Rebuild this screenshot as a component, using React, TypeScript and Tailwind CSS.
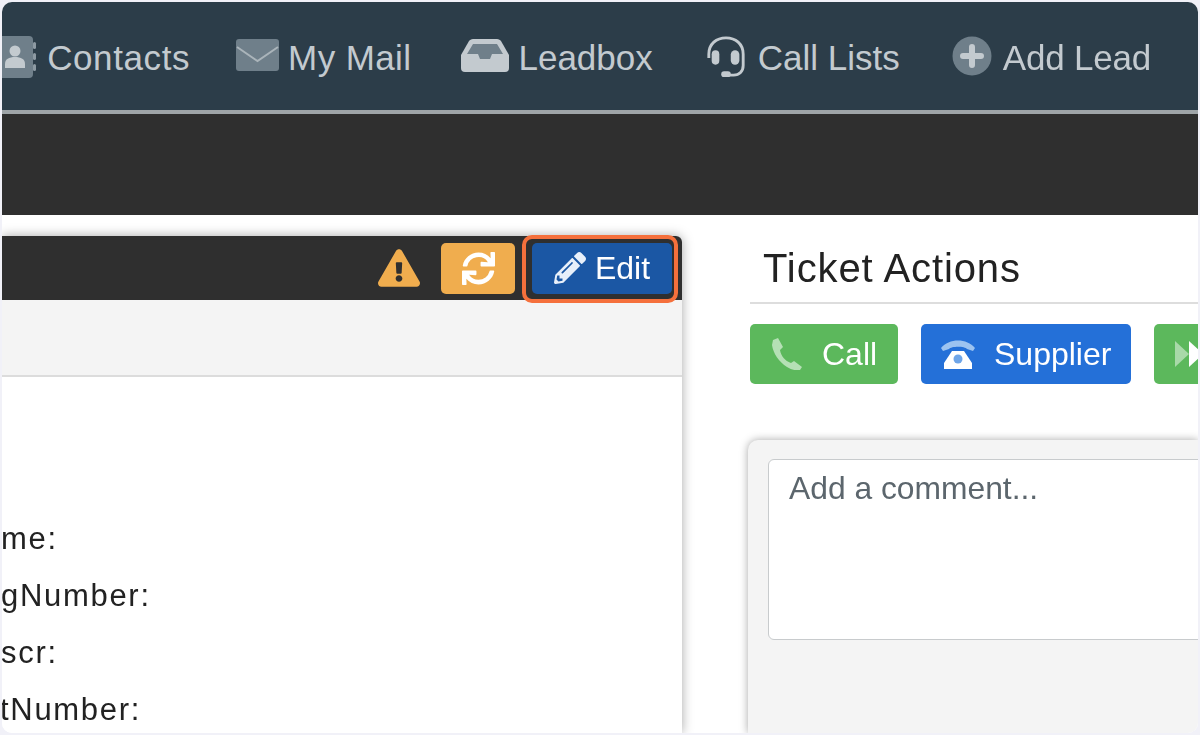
import type { ReactNode } from 'react';
import { FaExclamationTriangle, FaPencilAlt, FaSync } from 'react-icons/fa';

function ContactsIcon() {
  return (
    <svg width="38" height="42" viewBox="0 0 38 42" className="shrink-0 -ml-[4px]">
      <path d="M0 0h29a4 4 0 0 1 4 4v34a4 4 0 0 1-4 4H0z" fill="#6f7f8a" />
      <circle cx="15" cy="15" r="5.5" fill="#c3cacf" />
      <path d="M5 32v-4c0-5 4-7 10-7s10 2 10 7v4z" fill="#c3cacf" />
      <rect x="33" y="6" width="3" height="7" rx="1.5" fill="#8d9aa3" />
      <rect x="33" y="17" width="3" height="7" rx="1.5" fill="#8d9aa3" />
      <rect x="33" y="28" width="3" height="7" rx="1.5" fill="#8d9aa3" />
    </svg>
  );
}

function MailIcon() {
  return (
    <svg width="43" height="32" viewBox="0 0 43 32" className="shrink-0 -mt-[4px]">
      <rect width="43" height="32" rx="3" fill="#6f7f8a" />
      <path d="M1 8l20.5 14L42 8" fill="none" stroke="#aab4ba" strokeWidth="2" />
    </svg>
  );
}

function InboxIcon() {
  return (
    <svg width="48" height="33" viewBox="0 0 48 33" className="shrink-0 -mt-[4px] -ml-[2px]">
      <path d="M12 0h24c2 0 3 1 4 2l8 14v13a4 4 0 0 1-4 4H4a4 4 0 0 1-4-4V16L8 2c1-1 2-2 4-2z" fill="#c3cacf" />
      <path d="M12 5h24l6 10H31l-2 5H19l-2-5H6z" fill="#6f7f8a" />
    </svg>
  );
}

function HeadsetIcon() {
  return (
    <svg width="42" height="44" viewBox="0 0 44 46" className="shrink-0 mr-[2px]">
      <path d="M4 24v-4C4 9 12 3 22 3s18 6 18 17v12c0 6-4 10-10 10h-6" fill="none" stroke="#c3cacf" strokeWidth="3" />
      <rect x="7" y="16" width="8" height="15" rx="4" fill="#c3cacf" />
      <rect x="27" y="16" width="9" height="15" rx="4.5" fill="#c3cacf" />
      <rect x="17" y="38" width="10" height="6" rx="3" fill="#c3cacf" />
    </svg>
  );
}

function AddIcon() {
  return (
    <svg width="40" height="40" viewBox="0 0 40 40" className="shrink-0 -mt-[2px] mr-[2px]">
      <circle cx="20" cy="20" r="19.5" fill="#6f7f8a" />
      <path d="M20 11v18M11 20h18" stroke="#c3cacf" strokeWidth="6" strokeLinecap="round" />
    </svg>
  );
}

function PhoneIcon() {
  return (
    <svg width="33" height="32" viewBox="0 0 33 32" className="shrink-0">
      <path
        d="M3 2l5-2 5 9-3 3c1 6 5 11 11 13l3-2 8 6-2 3c-3 1-8 0-13-3C9 24 3 15 2 7z"
        fill="#b5e0b5"
      />
    </svg>
  );
}

function SupplierPhoneIcon() {
  return (
    <svg width="34" height="30" viewBox="0 0 34 30" className="shrink-0">
      <path d="M0 9C8 -1 26 -1 34 9l-2 3-6-2c-2-3-16-3-18 0l-6 2z" fill="#9cc3f0" />
      <path d="M11 12h12l8 12v6H3v-6z" fill="#ffffff" />
      <circle cx="17" cy="20" r="4.5" fill="#6ea5e8" />
    </svg>
  );
}

function ForwardIcon() {
  return (
    <svg width="33" height="30" viewBox="0 0 33 30" className="shrink-0">
      <path d="M1 2l14 13L1 28z" fill="#a9d9a9" />
      <path d="M15 2l14 13-14 13z" fill="#ffffff" />
    </svg>
  );
}

function NavItem({ icon, label, tracking = '' }: { icon: ReactNode; label: string; tracking?: string }) {
  return (
    <div className="flex items-center gap-[9px] shrink-0">
      {icon}
      <span className={`text-[35px] leading-none text-[#c3cacf] whitespace-nowrap ${tracking}`}>{label}</span>
    </div>
  );
}

function ActionButton({ color, width, icon, label }: { color: string; width: string; icon: ReactNode; label?: string }) {
  return (
    <button className={`flex items-center h-[60px] rounded-[5px] pl-[20px] gap-[19px] shrink-0 text-white text-[32px] ${color} ${width}`}>
      {icon}
      {label}
    </button>
  );
}

export default function App() {
  return (
    <div className="w-[1200px] h-[735px] bg-[#f1f1f8] p-[2px] font-['Liberation_Sans',sans-serif]">
      <div className="w-full h-full rounded-[10px] bg-white overflow-hidden flex flex-col blur-[0.5px]">
        <nav className="h-[108px] shrink-0 bg-[#2c3d49] flex items-center justify-end gap-[52px] pr-[47px] pt-[2px]">
          <NavItem icon={<ContactsIcon />} label="Contacts" tracking="tracking-[0.6px] -mr-[6px]" />
          <NavItem icon={<MailIcon />} label="My Mail" tracking="tracking-[0.4px]" />
          <NavItem icon={<InboxIcon />} label="Leadbox" />
          <NavItem icon={<HeadsetIcon />} label="Call Lists" />
          <NavItem icon={<AddIcon />} label="Add Lead" tracking="-tracking-[0.2px]" />
        </nav>
        <div className="h-[105px] shrink-0 bg-[#2f2f2f] border-t-[4px] border-[#9fa5a8]" />

        <div className="flex flex-1 min-h-0 pt-[21px] bg-white">
          <section className="w-[680px] shrink-0 rounded-tr-[6px] shadow-[0_0_12px_rgba(0,0,0,0.35)] flex flex-col">
            <header className="h-[64px] shrink-0 bg-[#2f2f2f] rounded-tr-[6px] flex items-center justify-end gap-[17px] pr-[10px]">
              <FaExclamationTriangle className="text-[#f0ad4e] text-[42px]" />
              <button className="w-[74px] h-[51px] ml-[4px] rounded-[5px] bg-[#f0ad4e] flex items-center justify-center">
                <FaSync className="text-white text-[33px]" />
              </button>
              <div className="relative">
                <button className="w-[140px] h-[51px] rounded-[5px] bg-[#1b57a4] text-white text-[32px] flex items-center justify-center gap-[9px]">
                  <FaPencilAlt className="text-[32px] text-[#e8f0fa]" />
                  Edit
                </button>
                <div className="absolute -left-[10px] -right-[6px] -top-[8px] -bottom-[9px] rounded-[10px] border-[4px] border-[#f5703c]" />
              </div>
            </header>
            <div className="h-[77px] shrink-0 bg-[#f4f4f4] border-b-[2px] border-[#dcdcdc]" />
            <div className="flex-1 bg-white overflow-hidden pt-[133px] text-[31px] tracking-[1.7px] leading-[57px] text-[#222]">
              <p className="h-[57px] -ml-[1px]">me:</p>
              <p className="h-[57px] -ml-[1px]">gNumber:</p>
              <p className="h-[57px] -ml-[1px]">scr:</p>
              <p className="h-[57px] -ml-[2px]">tNumber:</p>
            </div>
          </section>

          <section className="flex-1 min-w-0 ml-[68px] flex flex-col">
            <h2 className="h-[68px] shrink-0 pl-[13px] pt-[8px] text-[40px] tracking-[0.9px] leading-[48px] text-[#222] border-b-[2px] border-[#dddddd]">
              Ticket Actions
            </h2>
            <div className="flex gap-[23px] mt-[20px] overflow-hidden shrink-0">
              <ActionButton color="bg-[#5cb85c]" width="w-[148px]" icon={<PhoneIcon />} label="Call" />
              <ActionButton color="bg-[#2470d8]" width="w-[210px]" icon={<SupplierPhoneIcon />} label="Supplier" />
              <ActionButton color="bg-[#5cb85c]" width="w-[148px]" icon={<ForwardIcon />} />
            </div>
            <div className="flex-1 mt-[56px] -ml-[2px] pl-[20px] pt-[19px] bg-[#f4f4f4] rounded-tl-[10px] shadow-[0_0_8px_rgba(0,0,0,0.35)]">
              <textarea
                placeholder="Add a comment..."
                className="block w-[500px] h-[181px] resize-none bg-white rounded-[6px] border border-[#c8cbcd] px-[20px] py-[10px] text-[31.8px] leading-[36px] placeholder:text-[#5c666d] outline-none"
              />
            </div>
          </section>
        </div>
      </div>
    </div>
  );
}
